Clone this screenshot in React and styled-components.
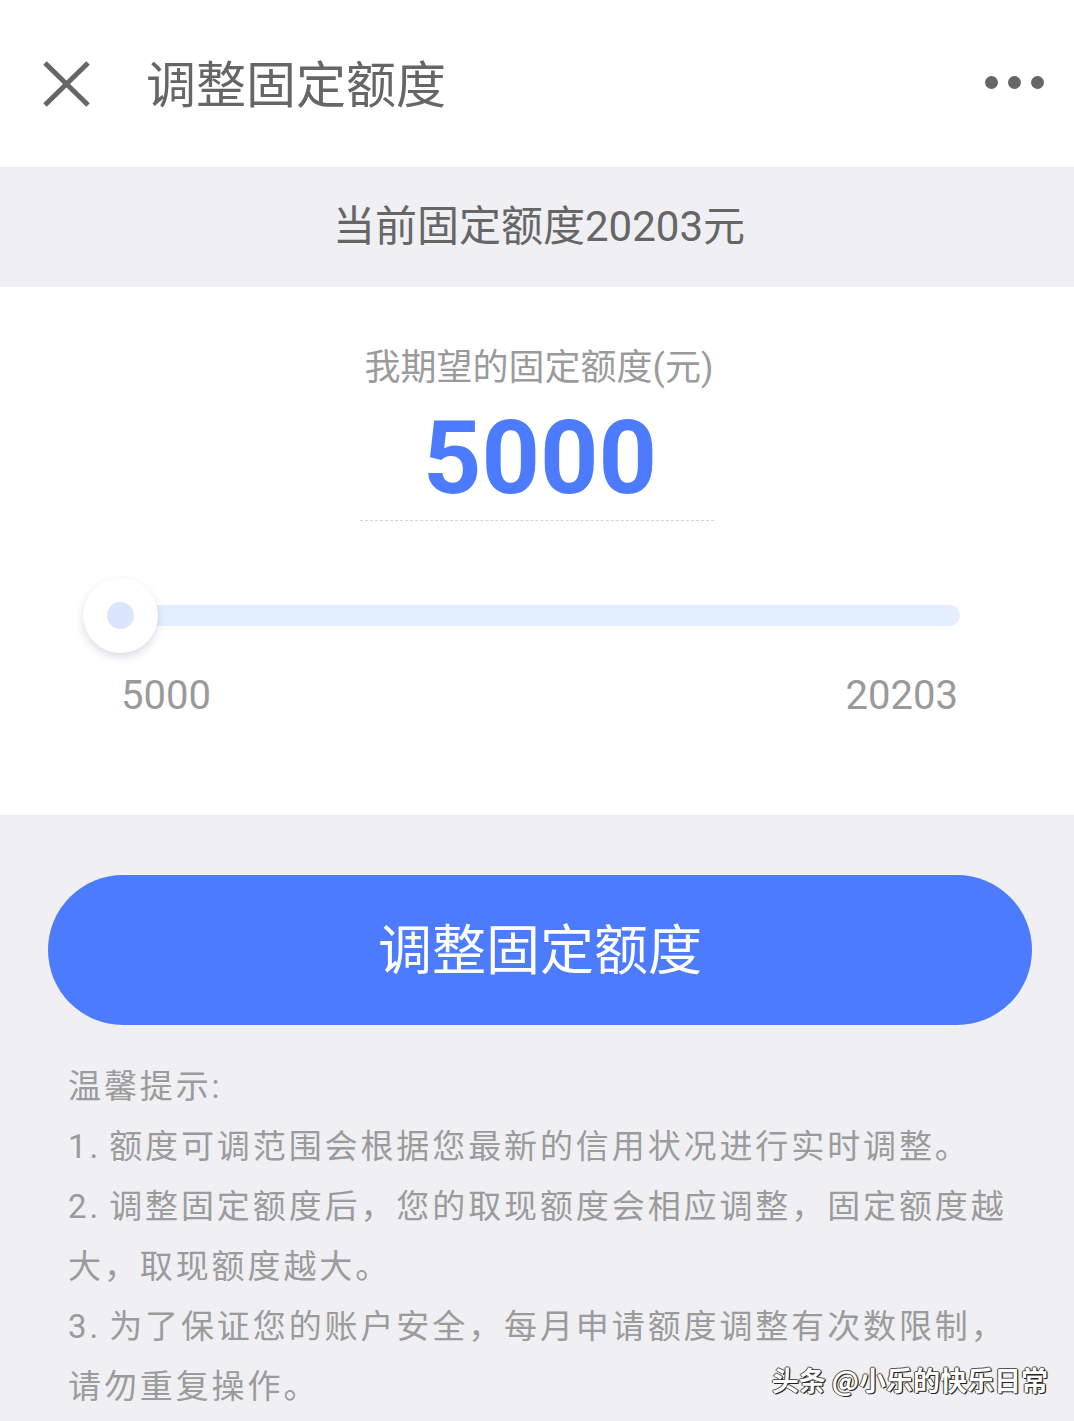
import React from "react";
import styled, { createGlobalStyle } from "styled-components";

const Global = createGlobalStyle`
  html, body { margin: 0; padding: 0; background: #efeff4; }
  body { font-family: Roboto, "Noto Sans CJK SC", sans-serif; }
  * { box-sizing: border-box; }
`;

const Page = styled.div`
  position: relative;
  width: 1074px;
  min-height: 1421px;
  background: #efeff4;
  overflow: hidden;
`;

const Header = styled.header`
  height: 167px;
  background: #fff;
  display: flex;
  align-items: center;
  padding: 0 30px 0 40px;
`;

const CloseBtn = styled.div`
  width: 52px;
  height: 52px;
  display: flex;
  align-items: center;
  justify-content: center;
`;

const Title = styled.h1`
  margin: 0 0 6px 54px;
  font-size: 50px;
  font-weight: 400;
  color: #666;
  flex: 1;
  line-height: 1;
  font-family: "Noto Sans CJK SC", sans-serif;
`;

const Dots = styled.div`
  display: flex;
  gap: 10px;
  margin-top: -2px;
`;

const Dot = styled.span`
  width: 13px;
  height: 13px;
  border-radius: 50%;
  background: #666;
`;

const Band = styled.div`
  height: 120px;
  display: flex;
  align-items: center;
  justify-content: center;
  font-size: 42px;
  color: #666;
  padding: 0 0 10px 4px;
`;

const Card = styled.section`
  height: 528px;
  background: #fff;
  display: flex;
  flex-direction: column;
  align-items: center;
  padding-top: 59px;
`;

const Label = styled.div`
  font-size: 36px;
  line-height: 44px;
  color: #9b9b9b;
  margin-left: 4px;
`;

const Amount = styled.div`
  margin-top: 17px;
  width: 354px;
  text-align: center;
  font-size: 102px;
  line-height: 102px;
  font-weight: 700;
  color: #4c7cfd;
  padding-bottom: 11px;
  padding-left: 6px;
  border-bottom: 1px dashed #d4d4d4;
`;

const SliderRow = styled.div`
  align-self: stretch;
  padding: 0 114px 0 120px;
  margin-top: 84px;
`;

const Track = styled.div`
  position: relative;
  height: 21px;
  border-radius: 11px;
  background: #e3effe;
`;

const Thumb = styled.div`
  position: absolute;
  left: -37px;
  top: 50%;
  width: 75px;
  height: 75px;
  margin-top: -38px;
  border-radius: 50%;
  background: #fff;
  box-shadow: 0 4px 8px rgba(80, 100, 140, 0.22);
  display: flex;
  align-items: center;
  justify-content: center;
`;

const ThumbDot = styled.span`
  width: 27px;
  height: 27px;
  border-radius: 50%;
  background: #dbe6fd;
`;

const Range = styled.div`
  align-self: stretch;
  display: flex;
  justify-content: space-between;
  padding: 0 116px 0 121px;
  margin-top: 46px;
  font-size: 40px;
  line-height: 48px;
  color: #9a9a9a;
`;

const Button = styled.button`
  display: flex;
  align-items: center;
  justify-content: center;
  margin: 60px 42px 0 48px;
  width: calc(100% - 90px);
  height: 150px;
  border: none;
  border-radius: 75px;
  background: #4c7cfd;
  color: #fff;
  font-size: 54px;
  font-family: "Noto Sans CJK SC", sans-serif;
  padding: 0 0 8px 0;
`;

const Tips = styled.div`
  padding: 32px 30px 0 68px;
  font-size: 33px;
  line-height: 60px;
  letter-spacing: 2.9px;
  word-spacing: -3px;
  color: #9b9b9b;
  white-space: nowrap;
`;

const TipLine = styled.div``;

const Watermark = styled.div`
  position: absolute;
  right: 26px;
  bottom: 22px;
  font-size: 27px;
  font-weight: 700;
  color: #fff;
  font-family: "Noto Sans CJK SC", sans-serif;
  text-shadow: 1px 1px 0 #222, -1px 0 0 #444, 0 -1px 0 #555, 1px 0 1px #000;
`;

export default function App() {
  return (
    <Page>
      <Global />
      <Header>
        <CloseBtn>
          <svg width="48" height="46" viewBox="0 0 48 46">
            <path d="M3 2 L46 44 M46 2 L3 44" stroke="#666" strokeWidth="5" fill="none" />
          </svg>
        </CloseBtn>
        <Title>调整固定额度</Title>
        <Dots>
          <Dot />
          <Dot />
          <Dot />
        </Dots>
      </Header>
      <Band>当前固定额度20203元</Band>
      <Card>
        <Label>我期望的固定额度(元)</Label>
        <Amount>5000</Amount>
        <SliderRow>
          <Track>
            <Thumb>
              <ThumbDot />
            </Thumb>
          </Track>
        </SliderRow>
        <Range>
          <span>5000</span>
          <span>20203</span>
        </Range>
      </Card>
      <Button>调整固定额度</Button>
      <Tips>
        <TipLine>温馨提示:</TipLine>
        <TipLine>1. 额度可调范围会根据您最新的信用状况进行实时调整。</TipLine>
        <TipLine>2. 调整固定额度后，您的取现额度会相应调整，固定额度越</TipLine>
        <TipLine>大，取现额度越大。</TipLine>
        <TipLine>3. 为了保证您的账户安全，每月申请额度调整有次数限制，</TipLine>
        <TipLine>请勿重复操作。</TipLine>
      </Tips>
      <Watermark>头条 @小乐的快乐日常</Watermark>
    </Page>
  );
}
